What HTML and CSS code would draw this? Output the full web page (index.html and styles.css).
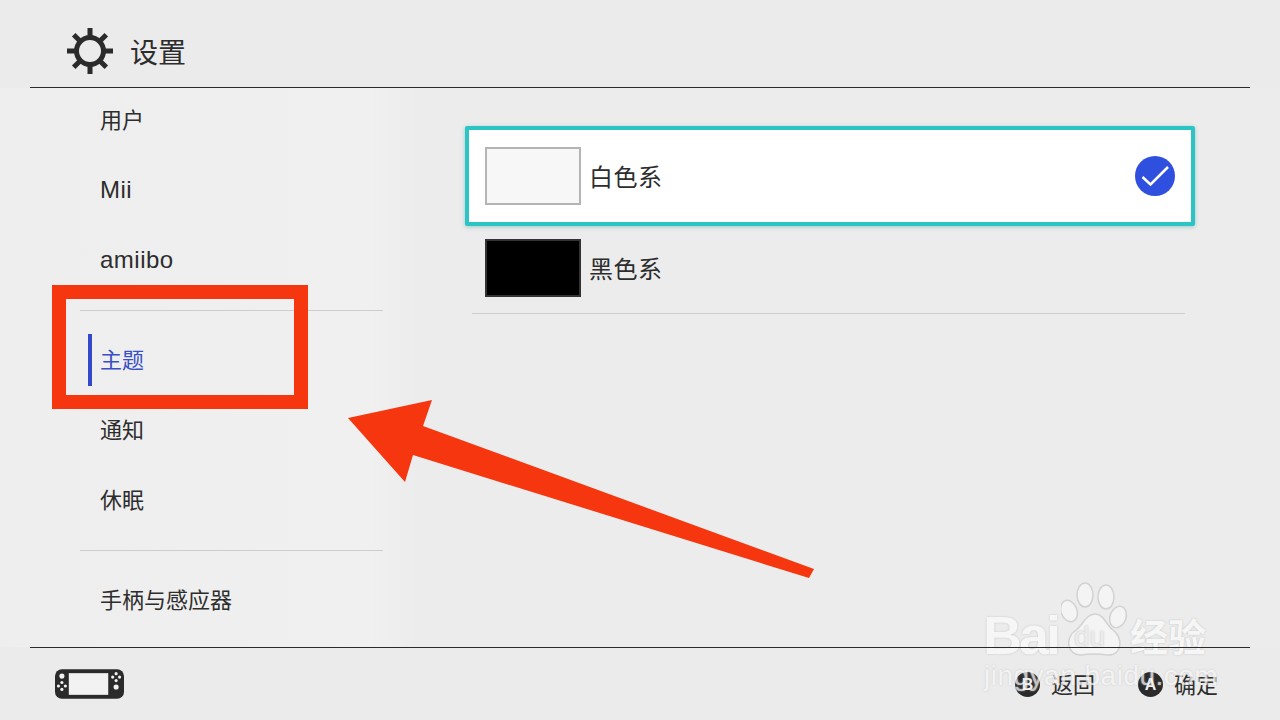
FILE: index.html
```html
<!DOCTYPE html>
<html lang="zh-CN">
<head>
    <meta charset="UTF-8">
    <meta name="viewport" content="width=device-width, initial-scale=1.0">
    <title>设置</title>
    <link rel="stylesheet" href="styles.css">
</head>
<body>
    <!-- watermark logo sits under the screen, the footer line shows through it -->
    <div class="watermark">
        <svg class="paw" width="80" height="80" viewBox="0 0 80 80">
            <g fill="#f4f4f4" stroke="#d2d2d2" stroke-width="1.5">
                <ellipse cx="8" cy="29" rx="8" ry="11" transform="rotate(-20 8 29)" />
                <ellipse cx="24" cy="13" rx="8" ry="12" />
                <ellipse cx="45" cy="15" rx="8" ry="12" />
                <ellipse cx="57" cy="35" rx="8" ry="11" transform="rotate(20 57 35)" />
                <path d="M34 32C43 32 45 43 52 48C62 55 62 73 47 73C39 72 30 71 21 73C6 74 3 56 15 48C22 43 25 32 34 32Z"/>
            </g>
        </svg>
        <span class="wm-bai">Bai</span>
        <span class="wm-du">du</span>
        <span class="wm-jy">经验</span>
    </div>

    <div class="screen">
        <header class="top-bar">
            <svg class="gear" width="48" height="48" viewBox="0 0 48 48">
                <g stroke="#2b2b2b" stroke-width="5" fill="none">
                    <circle cx="24" cy="24" r="13.5"/>
                    <path d="M24 1V10M24 38V47M1 24H10M38 24H47M7.7 7.7L14 14M34 34L40.3 40.3M40.3 7.7L34 14M14 34L7.7 40.3"/>
                </g>
            </svg>
            <h1 class="title">设置</h1>
        </header>

        <div class="main">
            <nav class="sidebar">
                <a class="menu-item first">用户</a>
                <a class="menu-item latin">Mii</a>
                <a class="menu-item latin">amiibo</a>
                <div class="menu-divider"></div>
                <a class="menu-item active">主题</a>
                <a class="menu-item">通知</a>
                <a class="menu-item">休眠</a>
                <div class="menu-divider"></div>
                <a class="menu-item">手柄与感应器</a>
            </nav>

            <section class="themes">
                <div class="theme-row selected">
                    <span class="swatch white"></span>
                    <span class="theme-name">白色系</span>
                    <svg class="check" width="40" height="40" viewBox="0 0 40 40">
                        <circle cx="20" cy="20" r="20" fill="#2f4fdf"/>
                        <path d="M7.5 21L15.5 28.5L33 11" stroke="#fff" stroke-width="2.5" fill="none"/>
                    </svg>
                </div>
                <div class="theme-row plain">
                    <span class="swatch black"></span>
                    <span class="theme-name">黑色系</span>
                </div>
            </section>
        </div>

        <footer class="bottom-bar">
            <svg class="console" width="69" height="30" viewBox="0 0 70 30">
                <rect width="70" height="30" rx="7" fill="#2b2b2b"/>
                <rect x="14" y="4" width="40" height="22" fill="#f2f2f2"/>
                <g fill="#f2f2f2">
                    <circle cx="7" cy="7" r="2.6"/>
                    <circle cx="7" cy="13.5" r="1.6"/>
                    <circle cx="3.5" cy="17" r="1.6"/>
                    <circle cx="10.5" cy="17" r="1.6"/>
                    <circle cx="7" cy="20.5" r="1.6"/>
                    <circle cx="62" cy="4.5" r="1.6"/>
                    <circle cx="58.5" cy="8" r="1.6"/>
                    <circle cx="65.5" cy="8" r="1.6"/>
                    <circle cx="62" cy="11.5" r="1.6"/>
                    <circle cx="62" cy="18" r="2.6"/>
                </g>
            </svg>
            <div class="actions">
                <span class="action"><i class="btn-key">B</i><span class="action-label">返回</span></span>
                <span class="action"><i class="btn-key">A</i><span class="action-label">确定</span></span>
            </div>
        </footer>
    </div>

    <!-- the url of the watermark runs over the footer buttons -->
    <span class="wm-url">jingyan.baidu.com</span>

    <!-- red markup drawn on top of the screenshot -->
    <div class="mark-box"></div>
    <svg class="mark-arrow" width="1280" height="720" viewBox="0 0 1280 720">
        <polygon points="348,418 432,400 423,426 814,569 809,578 413,455 405,482" fill="#f5360f"/>
    </svg>
</body>
</html>
```

FILE: styles.css
```css
* {
    box-sizing: border-box;
}
body {
    margin: 0;
    width: 1280px;
    height: 720px;
    overflow: hidden;
    position: relative;
    background:
        linear-gradient(to right, #eeeeee 0, #f0f0f0 370px, #ececec 420px) 0 88px / 100% 559px no-repeat,
        #ebebeb;
    color: #2d2d2d;
    font-family: "Noto Sans CJK SC", "Noto Sans", sans-serif;
}
.screen {
    position: relative;
    height: 720px;
    display: flex;
    flex-direction: column;
}
.top-bar {
    height: 88px;
    margin: 0 30px;
    padding: 14px 0 0 36px;
    display: flex;
    align-items: center;
    border-bottom: 1px solid #2b2b2b;
}
.title {
    margin: 0 0 0 16px;
    font-size: 28px;
    font-weight: 400;
    line-height: 40px;
}
.main {
    height: 559px;
    margin: 0 30px;
    padding-left: 50px;
    display: flex;
    overflow: hidden;
}
.sidebar {
    width: 303px;
    flex: none;
}
.menu-item {
    height: 70px;
    padding: 0 0 4px 20px;
    display: flex;
    align-items: center;
    position: relative;
    font-size: 22px;
}
.menu-item.latin {
    padding-bottom: 0;
    font-family: "Liberation Sans", sans-serif;
    font-size: 24px;
    letter-spacing: 0.5px;
}
.menu-item.first {
    margin-top: -3px;
}
.menu-item.active {
    color: #3a50c4;
}
.menu-item.active::before {
    content: "";
    position: absolute;
    left: 8px;
    top: 9px;
    width: 4px;
    height: 52px;
    background: #3349c8;
}
.menu-divider {
    height: 1px;
    margin: 15px 0 14px;
    background: #cdcdcd;
}
.themes {
    width: 730px;
    margin-left: 82px;
    padding-top: 38px;
}
.theme-row {
    display: flex;
    align-items: center;
}
.theme-row.selected {
    height: 100px;
    padding: 0 16px;
    background: #fff;
    border: 4px solid #2cc4c4;
    border-radius: 2px;
    box-shadow: 0 1px 4px rgba(40, 150, 150, 0.4);
}
.theme-row.plain {
    height: 88px;
    margin: 0 10px 0 7px;
    padding: 0 13px 3px;
    border-bottom: 1px solid #cfcfcf;
}
.swatch {
    width: 96px;
    height: 58px;
    flex: none;
    border: 2px solid #b4b4b4;
}
.swatch.white {
    background: #f7f7f7;
}
.swatch.black {
    background: #000;
    border-color: #333;
}
.theme-name {
    margin-left: 8px;
    font-size: 24px;
    line-height: 34px;
    letter-spacing: 0.5px;
}
.check {
    margin-left: auto;
}
.bottom-bar {
    height: 73px;
    margin: 0 30px;
    padding: 21px 32px 0 25px;
    display: flex;
    justify-content: space-between;
    border-top: 1px solid #2b2b2b;
}
.actions {
    display: flex;
    gap: 43px;
}
.action {
    height: 30px;
    display: flex;
    align-items: center;
    font-size: 22px;
}
.action-label {
    margin-top: -3px;
}
.btn-key {
    width: 25px;
    height: 25px;
    margin-right: 11px;
    border-radius: 50%;
    background: #2b2b2b;
    color: #f2f2f2;
    font: bold 16px/25px "Liberation Sans", sans-serif;
    text-align: center;
}
.mark-box {
    position: absolute;
    left: 52px;
    top: 285px;
    width: 256px;
    height: 124px;
    border: 14px solid #f5360f;
}
.mark-arrow {
    position: absolute;
    left: 0;
    top: 0;
}
.watermark {
    position: absolute;
    left: 980px;
    top: 580px;
    width: 240px;
    height: 120px;
    color: #f6f6f6;
    text-shadow: 0 0 2px #bdbdbd;
    font-family: "Liberation Sans", sans-serif;
}
.paw {
    position: absolute;
    left: 81px;
    top: 2px;
}
.wm-bai {
    position: absolute;
    left: 3px;
    top: 25px;
    font-size: 54px;
    font-weight: bold;
    line-height: 60px;
    letter-spacing: -3px;
}
.wm-du {
    position: absolute;
    left: 94px;
    top: 42px;
    font-size: 28px;
    line-height: 30px;
    color: #ececec;
}
.wm-jy {
    position: absolute;
    left: 150px;
    top: 30px;
    font-family: "Noto Sans CJK SC", sans-serif;
    font-size: 38px;
    font-weight: 700;
    line-height: 50px;
}
.wm-url {
    position: absolute;
    left: 984px;
    top: 660px;
    color: #f6f6f6;
    font-family: "Liberation Sans", sans-serif;
    font-size: 28px;
    line-height: 32px;
    letter-spacing: 0.5px;
    text-shadow: 0 0 2px #bdbdbd;
    opacity: 0.75;
}
```
